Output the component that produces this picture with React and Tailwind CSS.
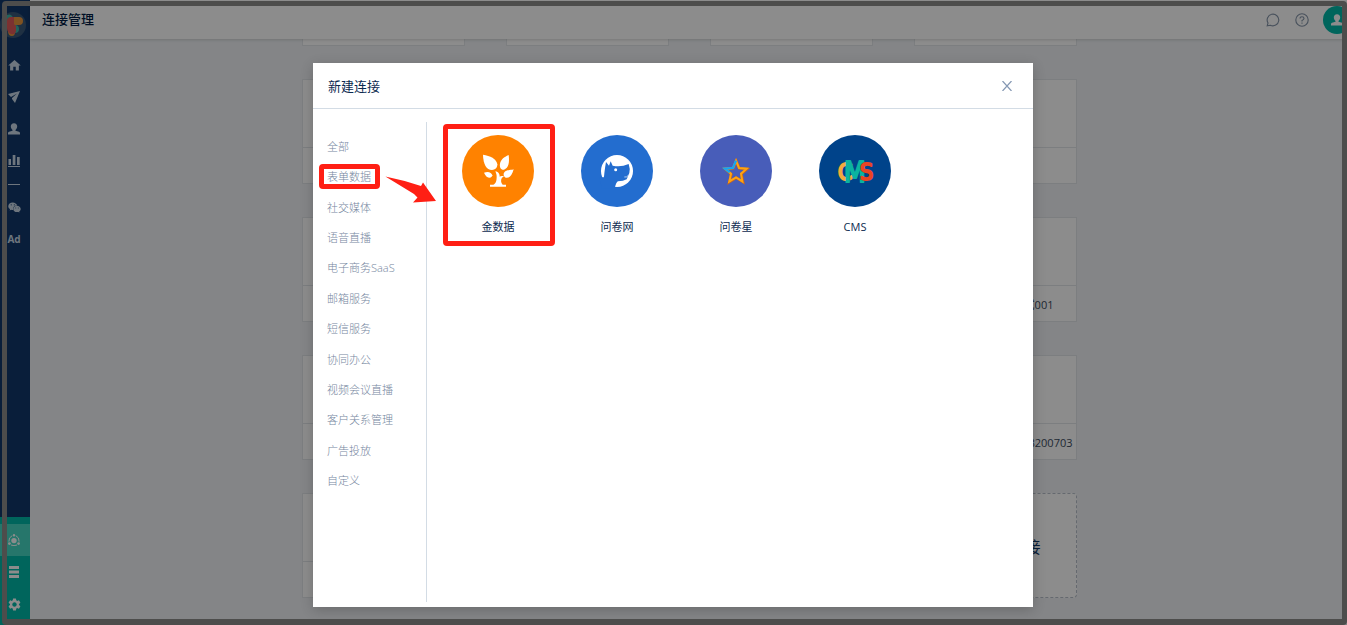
import { useState } from 'react';
import { FaWeixin } from 'react-icons/fa';
import { MdHome, MdSettings } from 'react-icons/md';

const categories = [
  '全部',
  '表单数据',
  '社交媒体',
  '语音直播',
  '电子商务SaaS',
  '邮箱服务',
  '短信服务',
  '协同办公',
  '视频会议直播',
  '客户关系管理',
  '广告投放',
  '自定义',
];

const providers = [
  { name: '金数据', color: 'bg-[#ff8200]', icon: <TreeLogo />, marked: true },
  { name: '问卷网', color: 'bg-[#236dcf]', icon: <DogLogo /> },
  { name: '问卷星', color: 'bg-[#485db9]', icon: <StarLogo /> },
  { name: 'CMS', color: 'bg-[#00438a]', icon: <CmsLogo /> },
];

// connection cards behind the dialog, four per row
const cards = Array.from({ length: 19 }, (_, i) => {
  if (i === 11) return { id: i, label: '测试001', pad: 'pr-[22px]' };
  if (i === 15) return { id: i, label: '8200703', pad: 'pr-[3px]' };
  return { id: i, label: '', pad: '' };
});

function TreeLogo() {
  return (
    <svg viewBox="-3 3 150 150" className="size-[50px]" fill="#fff" aria-hidden="true">
      <path d="M27 29C48 32 68 41 70 58C70 69 63 75 54 75C37 75 28 58 27 29Z" />
      <path d="M104 30C107 52 104 69 90 74C80 75 76 66 78 56C80 44 90 36 104 30Z" />
      <path d="M30 83C42 78 53 82 55 91C53 102 38 102 30 83Z" />
      <path d="M119 73C114 92 106 100 95 98C87 94 87 84 94 79C102 74 111 76 119 73Z" />
      <path d="M64 79C66 84 68 88 68 95C68 106 66 116 58 119H48V125H96V119H86C80 112 80 104 84 98L90 94C84 92 79 93 77 95C77 87 74 81 64 79Z" />
    </svg>
  );
}

function DogLogo() {
  return (
    <svg viewBox="96 78 150 150" className="size-[50px]" aria-hidden="true">
      <circle cx="171" cy="153" r="48" fill="#fff" />
      <path
        d="M138 126L147 137L152 124L158 137Q182 143 206 132Q211 146 208 159L200 178Q190 184 174 184Q168 187 164 206L126 206L118 172H131Q132 173 133 160Q135 142 138 126Z"
        fill="#236dcf"
      />
      <circle cx="167" cy="149" r="4.5" fill="#fff" />
      <path d="M193 171Q200 173 205 166" stroke="#fff" strokeWidth="2" fill="none" />
    </svg>
  );
}

function StarLogo() {
  return (
    <svg viewBox="453 78 150 150" className="size-[50px]" fill="none" strokeWidth="8" aria-hidden="true">
      <path d="M529 124L538 145L561 147L544 162L549 186L529 173L508 186L514 163L496 147L520 145Z" stroke="#c8641e" />
      <path d="M528 122L537 144L560 146L543 161L547 184L528 172L508 184L513 161L495 146L519 144Z" stroke="#ffa40f" strokeWidth="6" />
      <path d="M509 157L495 146L519 144L528 122" stroke="#14a5f5" strokeWidth="7" />
    </svg>
  );
}

function CmsLogo() {
  return (
    <svg
      viewBox="0 0 50 50"
      className="size-[50px]"
      fontFamily="'DejaVu Sans Condensed', 'DejaVu Sans', sans-serif"
      strokeWidth="2"
      strokeLinejoin="round"
      aria-hidden="true"
    >
      <text x="8" y="34" fontSize="23" fill="#f4a93d" stroke="#f4a93d">C</text>
      <text x="14" y="36" fontSize="28" fill="#0bb3a0" stroke="#0bb3a0">M</text>
      <text x="30" y="34" fontSize="23" fill="#ea4423" stroke="#ea4423">S</text>
    </svg>
  );
}

function BrandLogo() {
  return (
    <svg viewBox="0 0 26 26" className="size-[26px] shrink-0" aria-hidden="true">
      <circle cx="13" cy="13" r="13" fill="#3a5878" />
      <path d="M5 4Q11 0 13 6L10 13Q5 9 5 4Z" fill="#3fb3a6" />
      <rect x="11" y="13" width="8" height="8" rx="4" fill="#3fb3a6" />
      <rect x="10" y="5" width="13" height="8" rx="4" fill="#e8963c" />
      <path d="M8 16H15V20Q15 24 12 24Q8 24 8 19Z" fill="#e8963c" />
      <path d="M7 9Q7 5 11 5H14V12L16 14V19Q15 23 11 22Q7 20 7 16Z" fill="#e05a5a" />
    </svg>
  );
}

function PlaneIcon() {
  return (
    <svg viewBox="0 0 12 12" className="size-3" fill="currentColor" aria-hidden="true">
      <path d="M12 0L0 3L3 6L9 2.5L4 7L4 8L7 12Z" />
    </svg>
  );
}

function PersonIcon() {
  return (
    <svg viewBox="0 0 12 12" className="size-3" fill="currentColor" aria-hidden="true">
      <path d="M6 0.3C8 0.3 9.3 1.6 9.2 3.6C9.1 5 8.4 6.2 7.5 6.9V7.8L11 8.8Q12 9.2 12 10.3V11.5H0V10.3Q0 9.2 1 8.8L4.5 7.8V6.9C3.6 6.2 2.9 5 2.8 3.6C2.7 1.6 4 0.3 6 0.3Z" />
    </svg>
  );
}

function BarsIcon() {
  return (
    <svg viewBox="0 0 12 12" className="size-3" fill="currentColor" aria-hidden="true">
      <path d="M0.5 4H3V10H0.5ZM4.7 0H7.4V10H4.7ZM9 2H11.7V10H9ZM0 11H12V12H0Z" />
    </svg>
  );
}

function HubIcon() {
  return (
    <svg viewBox="0 0 12 12" className="size-3" fill="currentColor" aria-hidden="true">
      <circle cx="6" cy="6.6" r="2.7" />
      <circle cx="6" cy="1.2" r="1.2" />
      <circle cx="1.4" cy="9.6" r="1.4" />
      <circle cx="10.6" cy="9.6" r="1.4" />
      <path d="M0.9 7.6Q0.6 3.4 4 1.8M8 1.8Q11.4 3.4 11.1 7.6M3 11Q6 12.4 9 11" fill="none" stroke="currentColor" strokeWidth="1" />
    </svg>
  );
}

function ServerIcon() {
  return (
    <svg viewBox="0 0 12 12" className="size-3" fill="currentColor" aria-hidden="true">
      <path d="M1 0H11V3H1ZM1 4.5H11V7.5H1ZM1 9H11V12H1Z" />
    </svg>
  );
}

function ChatIcon() {
  return (
    <svg viewBox="0 0 14 14" className="size-[14px]" fill="none" stroke="currentColor" strokeWidth="1.1" aria-hidden="true">
      <path d="M1.2 12.8L2 10A5.8 5.8 0 1 1 4.4 12.2Z" />
    </svg>
  );
}

function HelpIcon() {
  return (
    <svg viewBox="0 0 14 14" className="size-[14px]" fill="none" stroke="currentColor" strokeWidth="1.1" aria-hidden="true">
      <circle cx="7" cy="7" r="6.2" />
      <path d="M5 5.6Q5 3.7 7 3.7T9 5.5Q9 6.5 7 7.6V8.6M7 9.6V10.8" />
    </svg>
  );
}

function SideButton({ label, className = '', children }) {
  return (
    <button
      type="button"
      aria-label={label}
      className={`flex h-8 w-full shrink-0 items-center justify-center pr-[2px] ${className}`}
    >
      {children}
    </button>
  );
}

function Sidebar() {
  return (
    <aside className="flex w-[30px] shrink-0 flex-col bg-[#12386a] text-[#c8d8e6]">
      <div className="flex h-[49px] shrink-0 items-start justify-center pr-1 pt-3">
        <BrandLogo />
      </div>
      <SideButton label="首页"><MdHome className="size-[15px] shrink-0" /></SideButton>
      <SideButton label="推送"><PlaneIcon /></SideButton>
      <SideButton label="用户"><PersonIcon /></SideButton>
      <SideButton label="统计"><BarsIcon /></SideButton>
      <div className="flex h-[14px] shrink-0 items-center justify-center pr-[2px]">
        <div className="h-px w-3 bg-current" />
      </div>
      <SideButton label="微信"><FaWeixin className="size-[13px] shrink-0" /></SideButton>
      <SideButton><span className="text-[10px] font-bold">Ad</span></SideButton>
      <div className="mt-auto bg-[#00b8a8] pb-[5px] pt-[7px] text-white">
        <SideButton label="连接" className="bg-[#46d8c4]"><HubIcon /></SideButton>
        <SideButton label="数据"><ServerIcon /></SideButton>
        <SideButton label="设置"><MdSettings className="size-[15px] shrink-0" /></SideButton>
      </div>
    </aside>
  );
}

function ConnectionCard({ label, pad }) {
  return (
    <div className="flex h-[105px] flex-col border border-[#e2e6ea] bg-white">
      <div className="flex-1 border-b border-[#e2e6ea]" />
      <div className={`flex h-[35px] items-center justify-end pt-[3px] text-[11px] text-[#3c4c60] ${pad}`}>{label}</div>
    </div>
  );
}

function ConnectDialog() {
  const [active, setActive] = useState('表单数据');

  return (
    <div role="dialog" aria-labelledby="dialog-title" className="w-[720px] bg-white shadow-[0_3px_12px_rgba(0,0,0,0.2)]">
      <header className="flex h-[46px] items-center justify-between border-b border-[#d3dce5] pl-[15px] pr-[21px]">
        <h2 id="dialog-title" className="pt-[2px] text-[13px] text-[#0c2a50]">新建连接</h2>
        <button type="button" aria-label="关闭" className="text-[#8497b3]">
          <svg viewBox="0 0 10 10" className="size-[10px]" stroke="currentColor" strokeWidth="1.2" aria-hidden="true">
            <path d="M0.5 0L9.5 10M9.5 0L0.5 10" />
          </svg>
        </button>
      </header>

      <div className="flex items-start pb-[5px] pt-[13px]">
        <nav className="h-[480px] w-[114px] shrink-0 border-r border-[#d3dce5] pl-[14px] pt-4">
          <ul className="flex h-[352px] flex-col justify-between">
            {categories.map((item) => (
              <li key={item} className="relative h-[18px]">
                <button
                  type="button"
                  onClick={() => setActive(item)}
                  className="block whitespace-nowrap text-[11px] font-light leading-[18px] text-[#75869e]"
                >
                  {item}
                </button>
                {item === active && (
                  <>
                    <span className="pointer-events-none absolute -left-2 -top-1 h-[25px] w-[61px] rounded border-[5px] border-[#ff1f14]" />
                    <svg viewBox="0 0 52 27" className="pointer-events-none absolute left-[58px] top-2 h-[27px] w-[52px]" fill="#ff1f14" aria-hidden="true">
                      <path d="M0.4 0.5Q18 4 36 10L38 6.5L51 25L28 26.4L32.5 21.5L29 18Z" />
                    </svg>
                  </>
                )}
              </li>
            ))}
          </ul>
        </nav>

        <ul className="flex items-start gap-[47px] pl-[35px] pt-[13px]">
          {providers.map(({ name, color, icon, marked }) => (
            <li key={name} className="relative w-[72px]">
              <button type="button" className="flex w-full flex-col items-center gap-[11px]">
                <span className={`flex size-[72px] items-center justify-center rounded-full ${color}`}>{icon}</span>
                <span className="text-[11px] leading-[18px] text-[#0c2a50]">{name}</span>
              </button>
              {marked && (
                <span className="pointer-events-none absolute -bottom-[10px] -left-[19px] -right-[21px] -top-[11px] rounded border-[5px] border-[#ff1f14]" />
              )}
            </li>
          ))}
        </ul>
      </div>
    </div>
  );
}

export default function App() {
  return (
    <div className="relative flex h-screen overflow-hidden bg-[#f0f3f6] font-['Open_Sans','Noto_Sans_CJK_SC',sans-serif]">
      <Sidebar />

      <div className="flex min-w-0 flex-1 flex-col">
        <header className="relative flex h-[39px] shrink-0 items-center justify-between bg-white pl-3 shadow-[0_1px_3px_rgba(0,0,0,0.15)]">
          <h1 className="text-[13px] font-medium text-[#001c46]">连接管理</h1>
          <div className="-mr-1 flex items-center text-[#8494a8]">
            <button type="button" aria-label="消息" className="mr-[15px]"><ChatIcon /></button>
            <button type="button" aria-label="帮助" className="mr-[14px]"><HelpIcon /></button>
            <button type="button" aria-label="账户" className="flex size-7 items-center justify-center rounded-full bg-[#00b8a8] text-white">
              <PersonIcon />
            </button>
          </div>
        </header>

        <main className="min-h-0 flex-1 overflow-hidden pl-px">
          <div className="mx-auto -mt-[98px] grid w-[775px] grid-cols-4 gap-x-[41px] gap-y-[33px]">
            {cards.map((card) => (
              <ConnectionCard key={card.id} label={card.label} pad={card.pad} />
            ))}
            <button type="button" className="flex h-[105px] items-center justify-end rounded border border-dashed border-[#b8c0ca] bg-white pr-[35px] pt-[3px] text-base text-[#123a68]">
              新建连接
            </button>
          </div>
        </main>
      </div>

      {/* mask + dialog */}
      <div className="absolute inset-0 flex items-start justify-center bg-black/45 pr-px pt-[63px]">
        <ConnectDialog />
      </div>

      {/* window frame */}
      <div className="pointer-events-none absolute bottom-0 left-[2px] right-0 top-px rounded border-[5px] border-b-[6px] border-[#4d4d4c]" />
    </div>
  );
}
